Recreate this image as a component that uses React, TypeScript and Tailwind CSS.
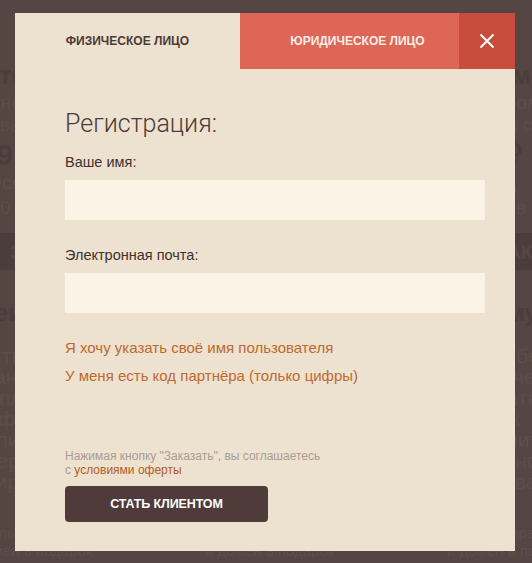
import React from 'react';

const font = { fontFamily: '"Liberation Sans", Arial, sans-serif' };

// Faint page that sits behind the modal overlay
const BackgroundPage: React.FC = () => {
  const cols = [0, 1, 2];
  const grid = 'grid grid-cols-[200px_200px_200px] gap-[42px] -ml-[37px] w-[684px]';
  return (
    <div className="w-[532px] h-[563px] bg-[#554543] text-[#5e4e4b] overflow-hidden" style={font}>
      <div className={`${grid} h-[233px] pt-[60px]`}>
        {cols.map(i => (
          <div key={i} className="flex flex-col">
            <div className="text-[26px] font-bold leading-[30px] text-[#4b3d3b]">Оптимальный</div>
            <div className="text-[19px] leading-[22px] mt-[2px]">для небольших</div>
            <div className="text-[19px] leading-[22px]">и новых сайтов</div>
            <div className="text-[30px] font-bold leading-[34px] mt-[2px] text-[#4b3d3b]">199 ₽</div>
            <div className="text-[19px] leading-[22px]">в месяц</div>
            <div className="text-[19px] leading-[24px] mt-[2px] text-[#634c48]">1 980 ₽ в год</div>
          </div>
        ))}
      </div>
      <div className={`${grid} h-[37px]`}>
        {cols.map(i => (
          <div key={i} className="bg-[#4b3d3b] flex items-center justify-center text-[20px] font-bold text-[#584845]">ЗАКАЗАТЬ</div>
        ))}
      </div>
      <div className={`${grid} pt-[29px]`}>
        {cols.map(i => (
          <div key={i} className="flex flex-col">
            <div className="text-[24px] font-bold leading-[28px] text-[#4b3d3b]">Преимущества</div>
            <div className="text-[21px] leading-[21px] mt-[18px]">Сайты без ограничений</div>
            <div className="text-[21px] leading-[21px]">Бесплатный домен</div>
            <div className="text-[21px] leading-[21px]">Трафик безлимитный</div>
            <div className="text-[21px] leading-[21px]">Резервное копирование</div>
            <div className="text-[15px] leading-[18px] mt-[32px]">Панель управления</div>
            <div className="text-[15px] leading-[18px]">и домен в подарок</div>
            <div className="text-[15px] leading-[18px] mt-[11px]">SSL-сертификат</div>
            <div className="text-[15px] leading-[16px] mt-[6px]">WordPress</div>
            <div className="text-[15px] leading-[16px]">CMS в один клик</div>
          </div>
        ))}
      </div>
    </div>
  );
};

const App: React.FC = () => {
  return (
    <div className="relative w-[532px] h-[563px] overflow-hidden">
      <BackgroundPage />
      {/* Registration modal */}
      <div className="absolute left-[15px] top-[13px] w-[500px] h-[538px] bg-[#ede1d0] flex flex-col" style={font}>
        <div className="flex h-[56px]">
          <button className="w-[225px] flex items-center justify-center text-[12px] font-bold uppercase text-[#4b3a38]">
            Физическое лицо
          </button>
          <button className="w-[219px] bg-[#dd6657] flex items-center justify-center pl-[16px] text-[12px] font-bold uppercase text-[#fbeee6]">
            Юридическое лицо
          </button>
          <button className="w-[56px] bg-[#c94c3c] flex items-center justify-center">
            <svg width="16" height="16" viewBox="0 0 16 16" fill="none" stroke="#ffffff" strokeWidth="2">
              <path d="M1.5 1.5 L14.5 14.5 M14.5 1.5 L1.5 14.5" />
            </svg>
          </button>
        </div>
        <div className="flex flex-col pl-[50px] pr-[30px]">
          <h2 className="mt-[40px] text-[25px] leading-[30px] font-light text-[#4b3a38]" style={{ fontFamily: 'Roboto, "Liberation Sans", sans-serif' }}>
            Регистрация:
          </h2>
          <label className="mt-[13px] text-[14.5px] leading-[20px] text-[#3f302e]">Ваше имя:</label>
          <input className="mt-[8px] h-[40px] w-[420px] bg-[#faf3e6] outline-none px-3 text-[14px]" />
          <label className="mt-[25px] text-[14.5px] leading-[20px] text-[#3f302e]">Электронная почта:</label>
          <input className="mt-[8px] h-[40px] w-[420px] bg-[#faf3e6] outline-none px-3 text-[14px]" />
          <a className="mt-[21px] text-[15px] leading-[28px] text-[#bf6a2e] cursor-pointer">Я хочу указать своё имя пользователя</a>
          <a className="text-[15px] leading-[28px] text-[#bf6a2e] cursor-pointer">У меня есть код партнёра (только цифры)</a>
          <p className="mt-[59px] text-[12px] leading-[14px] text-[#a99d93]">
            Нажимая кнопку "Заказать", вы соглашаетесь
            <br />
            с <a className="text-[#b55d22] cursor-pointer">условиями оферты</a>
          </p>
          <button className="mt-[9px] w-[203px] h-[36px] rounded-[4px] bg-[#4e3b3a] text-white text-[12.5px] font-bold uppercase tracking-[-0.01em]">
            Стать клиентом
          </button>
        </div>
      </div>
    </div>
  );
};

export default App;
